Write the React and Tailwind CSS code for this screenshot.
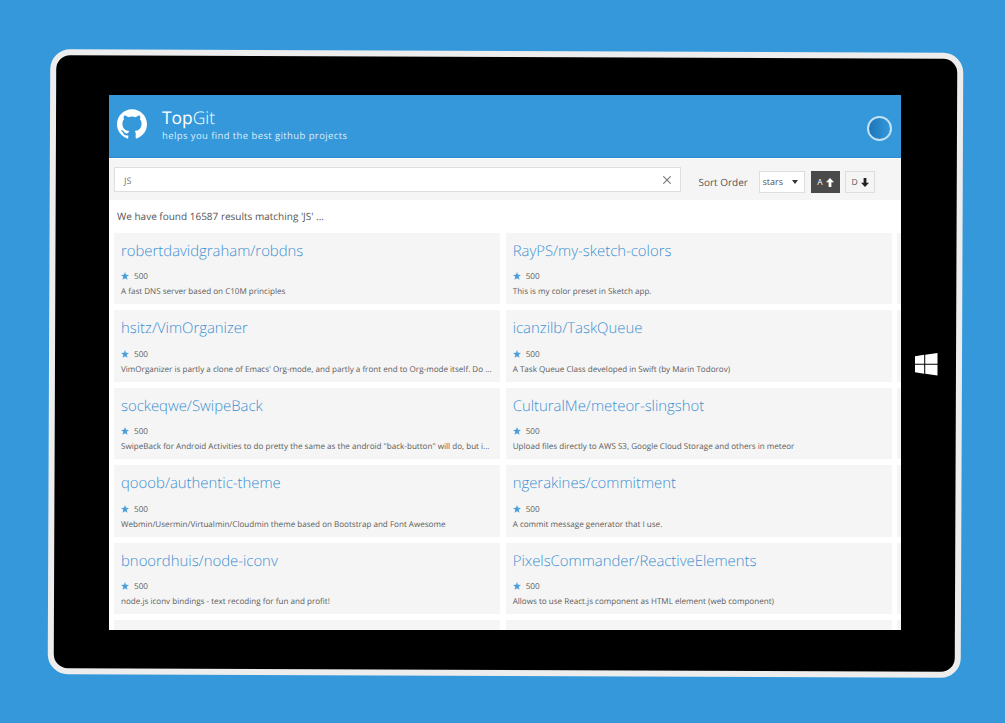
import { SiGithub } from "react-icons/si";

const REPOS = [
  ["robertdavidgraham/robdns", "A fast DNS server based on C10M principles"],
  ["RayPS/my-sketch-colors", "This is my color preset in Sketch app."],
  ["hsitz/VimOrganizer", "VimOrganizer is partly a clone of Emacs' Org-mode, and partly a front end to Org-mode itself. Do ..."],
  ["icanzilb/TaskQueue", "A Task Queue Class developed in Swift (by Marin Todorov)"],
  ["sockeqwe/SwipeBack", "SwipeBack for Android Activities to do pretty the same as the android \"back-button\" will do, but i..."],
  ["CulturalMe/meteor-slingshot", "Upload files directly to AWS S3, Google Cloud Storage and others in meteor"],
  ["qooob/authentic-theme", "Webmin/Usermin/Virtualmin/Cloudmin theme based on Bootstrap and Font Awesome"],
  ["ngerakines/commitment", "A commit message generator that I use."],
  ["bnoordhuis/node-iconv", "node.js iconv bindings - text recoding for fun and profit!"],
  ["PixelsCommander/ReactiveElements", "Allows to use React.js component as HTML element (web component)"],
];

function Star() {
  return (
    <svg viewBox="0 0 24 24" className="mb-[2px] size-2 fill-[#4a9fdb]">
      <path d="M12 0l3.100 8.600 8.900.4-7 5.600 2.500 8.900L12 18.400l-7.500 5.100 2.500-8.900L0 9l8.900-.4z" />
    </svg>
  );
}

function Arrow({ down }) {
  return (
    <svg viewBox="0 0 8 9" className={down ? "h-[9px] w-2 rotate-180 fill-[#222]" : "h-[9px] w-2 fill-white"}>
      <path d="M4 0l4 4.300H5.400V9H2.600V4.300H0z" />
    </svg>
  );
}

function Card({ name, text }) {
  return (
    <article className="min-w-0 bg-[#f5f5f5] px-[7px] pt-2">
      <h2 className="text-[14.880px] leading-[21px] font-light whitespace-nowrap text-[#4090d2]">{name}</h2>
      <div className="mt-[9px] flex h-[13px] items-center gap-[5px] text-[8.200px] text-[#5c5c5c]">
        <Star />
        <span>500</span>
      </div>
      <p className="mt-[1.300px] text-[8.080px] leading-[13px] whitespace-nowrap text-[#5c5c5c]">{text}</p>
    </article>
  );
}

function Header() {
  return (
    <header className="flex h-[63px] shrink-0 items-start border-b border-[#2f8bce] bg-[#3498db] px-2 text-white">
      <SiGithub className="mt-[14px] size-[30px]" />
      <div className="ml-[15px] pt-3">
        <h1 className="text-[17.400px] leading-[22px] font-light">
          <span className="font-normal">Top</span>Git
        </h1>
        <p className="-mt-px text-[9.500px] leading-[15px] tracking-[0.4px] text-[#dcedf9]">helps you find the best github projects</p>
      </div>
      <div className="mt-[20.500px] mr-px ml-auto size-[25px] rounded-full border-2 border-[#c5e1f5] bg-linear-to-r from-[#1c76b8] to-[#3498db]" />
    </header>
  );
}

function Toolbar() {
  return (
    <div className="flex h-[42px] shrink-0 items-start border-t border-[#fcfcfc] bg-[#f5f5f5] pl-[5px] text-[#555]">
      <div className="mt-2 flex h-[25px] w-[567px] items-center justify-between border border-[#dedede] bg-white pr-[9px] pl-[9px] text-[9px] text-[#777]">
        <span className="pt-[2px]">JS</span>
        <svg viewBox="0 0 8 8" className="size-2 stroke-[#777] stroke-[1.100]">
          <path d="M.3.3l7.400 7.400M7.700.3L.3 7.700" />
        </svg>
      </div>
      <span className="mt-[15.500px] ml-[17.500px] w-[60px] text-[10px] leading-[14px] whitespace-nowrap">Sort Order</span>
      <div className="mt-[12px] flex h-[22px] w-[46px] items-center justify-between border border-[#dedede] bg-white pr-[6px] pl-[3px] text-[9px]">
        <span>stars</span>
        <svg viewBox="0 0 6 4" className="h-1 w-[6px] fill-[#333]">
          <path d="M0 0h6L3 4z" />
        </svg>
      </div>
      <div className="mt-[12px] ml-[6.500px] flex h-[22px] w-[29px] items-center justify-center gap-[3px] bg-[#4a4a4a] text-[8.500px] text-white">
        <span className="pt-[2px]">A</span>
        <Arrow />
      </div>
      <div className="mt-[12px] ml-[5px] flex h-[22px] w-[30px] items-center justify-center gap-[3px] border border-[#dedede] text-[8.500px]">
        <span className="pt-[2px]">D</span>
        <Arrow down />
      </div>
    </div>
  );
}

export default function App() {
  return (
    <div className="relative h-[723px] w-[1005px] overflow-hidden bg-[#3498db] font-['Open_Sans',sans-serif] [text-rendering:geometricPrecision]">
      <div className="absolute top-[51px] left-[49px] h-[625px] w-[913px] rotate-[0.24deg] rounded-[20px] border-[6px] border-[#ededed] bg-black" />
      <main className="absolute top-[95px] left-[109px] flex h-[535px] w-[792px] flex-col overflow-hidden bg-white">
        <Header />
        <Toolbar />
        <p className="mt-[9px] ml-2 shrink-0 text-[10px] leading-[14px] text-[#555]">We have found 16587 results matching 'JS' ...</p>
        <div className="mt-[9.700px] ml-[5px] grid shrink-0 auto-rows-[71.500px] grid-cols-[386px_386px_386px] gap-x-[5.700px] gap-y-[6.050px]">
          {Array.from({ length: 6 }, (_, row) =>
            [0, 1, 2].map((col) => {
              const repo = col < 2 && REPOS[row * 2 + col];
              return repo ? (
                <Card key={`${row}-${col}`} name={repo[0]} text={repo[1]} />
              ) : (
                <div key={`${row}-${col}`} className="bg-[#f5f5f5]" />
              );
            }),
          )}
        </div>
      </main>
      <svg viewBox="0 0 22 22" className="absolute top-[353px] left-[915px] size-[22.500px] fill-white">
        <path d="M0 3.200l9-1.400v8.700H0zM10 1.600L22 0v10.500H10zM0 11.500h9v8.700l-9-1.300zM10 11.500h12V22l-12-1.600z" />
      </svg>
    </div>
  );
}
